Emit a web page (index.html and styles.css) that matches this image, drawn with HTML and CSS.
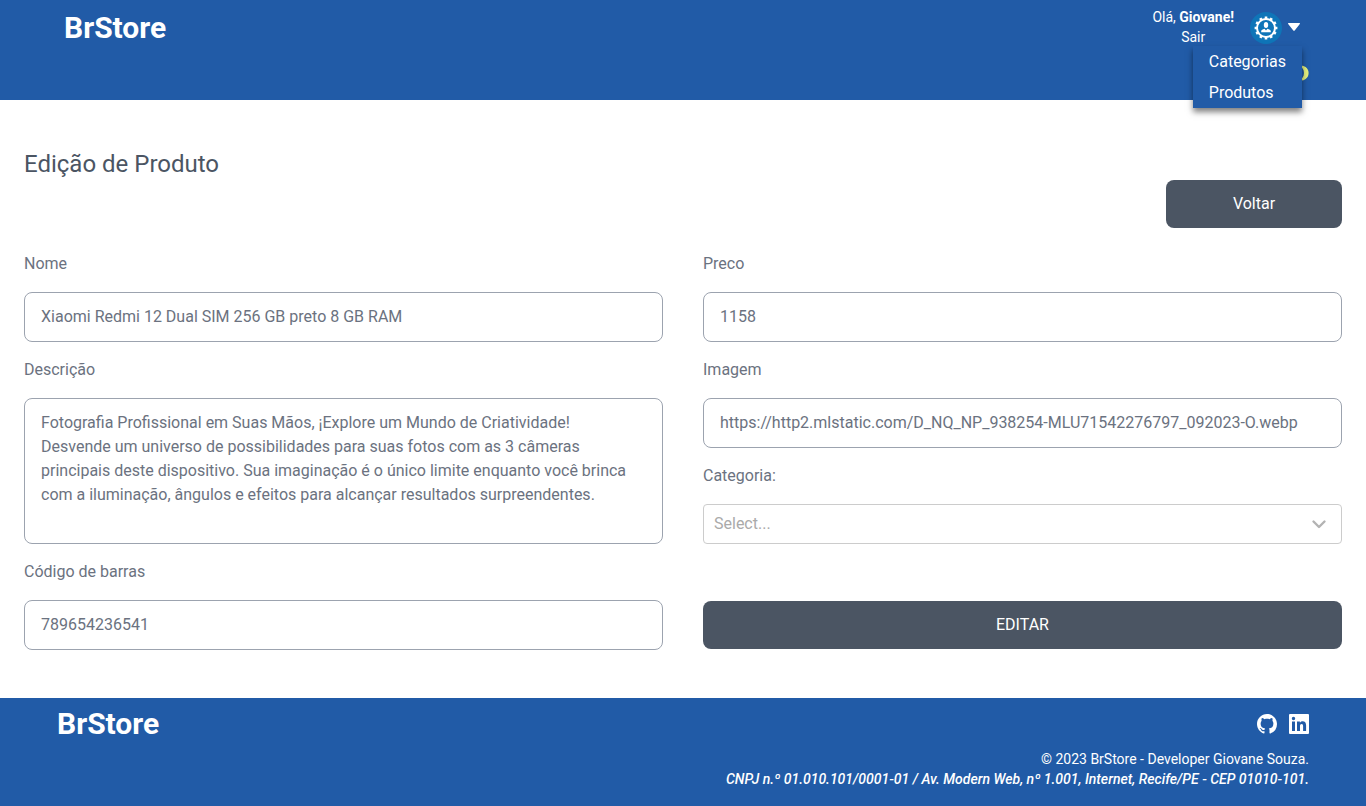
FILE: index.html
```html
<!DOCTYPE html>
<html lang="pt-BR">
<head>
<meta charset="utf-8">
<meta name="viewport" content="width=device-width, initial-scale=1">
<title>BrStore - Edição de Produto</title>
<link rel="stylesheet" href="styles.css">
</head>
<body>
<header class="header">
  <a class="brand" href="#">BrStore</a>
  <div class="header-side">
    <div class="account">
      <div class="greeting">
        <span>Olá, <strong>Giovane!</strong></span>
        <a href="#">Sair</a>
      </div>
      <button class="menu-toggle" type="button" aria-label="Menu de administração">
        <svg class="avatar" viewBox="0 0 32 32" width="32" height="32" aria-hidden="true">
          <circle cx="16" cy="16" r="16" fill="#0f75b8"/>
          <circle cx="16" cy="16" r="9" fill="none" stroke="#fff" stroke-width="2"/>
          <path d="M16 4.600v3M16 24.400v3M4.600 16h3M24.400 16h3M10.300 6.100l1.500 2.600M20.200 23.300l1.500 2.600M6.100 10.300l2.600 1.500M23.300 20.200l2.600 1.500M21.700 6.100l-1.500 2.600M11.800 23.300l-1.500 2.600M25.900 10.300l-2.600 1.500M8.700 20.200l-2.600 1.500" stroke="#fff" stroke-width="2.600"/>
          <ellipse cx="16" cy="13" rx="2.200" ry="2.900" fill="#fff"/>
          <path d="M11.200 20.200v-1c0-1.400 1.600-2 3.400-2.500l1.400 1.800 1.400-1.800c1.800.5 3.400 1.100 3.400 2.500v1z" fill="#fff"/>
        </svg>
        <svg class="caret" viewBox="0 0 12 10" width="12" height="10" aria-hidden="true"><path d="M.6 0h10.800c.6 0 .8.700.4 1.100L6.700 7.400c-.4.500-1 .5-1.400 0L.2 1.100C-.2.700 0 0 .6 0z" fill="#fff"/></svg>
      </button>
      <nav class="dropdown" aria-label="Administração">
        <a href="#">Categorias</a>
        <a href="#">Produtos</a>
      </nav>
    </div>
    <button class="theme" type="button" aria-label="Alternar tema">
      <svg viewBox="0 0 16 16" width="16" height="16" aria-hidden="true"><path d="M6 .8a7.500 7.500 0 1 1 0 14.400C9 14 11 11.500 11 8S9 2 6 .8z" fill="#e3f07f"/></svg>
    </button>
  </div>
</header>

<main class="main">
  <h1 class="title">Edição de Produto</h1>
  <div class="toolbar"><button class="button back" type="button">Voltar</button></div>
  <form class="form">
    <div class="column">
      <div class="field">
        <label for="nome">Nome</label>
        <input class="control" id="nome" type="text" value="Xiaomi Redmi 12 Dual SIM 256 GB preto 8 GB RAM">
      </div>
      <div class="field">
        <label for="descricao">Descrição</label>
        <textarea class="control" id="descricao" rows="5">Fotografia Profissional em Suas Mãos, ¡Explore um Mundo de Criatividade! Desvende um universo de possibilidades para suas fotos com as 3 câmeras principais deste dispositivo. Sua imaginação é o único limite enquanto você brinca com a iluminação, ângulos e efeitos para alcançar resultados surpreendentes.</textarea>
      </div>
      <div class="field">
        <label for="codigo">Código de barras</label>
        <input class="control" id="codigo" type="text" value="789654236541">
      </div>
    </div>
    <div class="column">
      <div class="field">
        <label for="preco">Preco</label>
        <input class="control" id="preco" type="text" value="1158">
      </div>
      <div class="field">
        <label for="imagem">Imagem</label>
        <input class="control" id="imagem" type="text" value="https://http2.mlstatic.com/D_NQ_NP_938254-MLU71542276797_092023-O.webp">
      </div>
      <div class="field">
        <label for="categoria">Categoria:</label>
        <div class="select-box">
          <select id="categoria"><option>Select...</option></select>
          <svg viewBox="0 0 20 20" width="20" height="20" aria-hidden="true"><path d="M4.500 7.500l5.500 5.500 5.500-5.500" fill="none" stroke="#b3b3b3" stroke-width="2.400" stroke-linecap="round" stroke-linejoin="round"/></svg>
        </div>
      </div>
      <button class="button submit" type="submit">EDITAR</button>
    </div>
  </form>
</main>

<footer class="footer">
  <a class="brand" href="#">BrStore</a>
  <div class="footer-side">
    <div class="social">
      <a href="#" aria-label="GitHub"><svg viewBox="0 0 16 16" width="20" height="20" aria-hidden="true"><path fill="#fff" d="M8 0C3.580 0 0 3.580 0 8c0 3.540 2.290 6.530 5.470 7.590.4.070.55-.17.55-.38 0-.19-.01-.82-.01-1.490-2.010.37-2.530-.49-2.690-.94-.09-.23-.48-.94-.82-1.130-.28-.15-.68-.52-.01-.53.63-.01 1.080.58 1.230.82.72 1.210 1.870.87 2.330.66.07-.52.28-.87.51-1.070-1.780-.2-3.640-.89-3.640-3.950 0-.87.31-1.590.82-2.150-.08-.2-.36-1.020.08-2.120 0 0 .67-.21 2.200.82.64-.18 1.320-.27 2-.27s1.360.09 2 .27c1.530-1.040 2.200-.82 2.200-.82.44 1.100.16 1.920.08 2.120.51.56.82 1.270.82 2.150 0 3.070-1.870 3.750-3.650 3.950.29.25.54.73.54 1.480 0 1.070-.01 1.930-.01 2.200 0 .21.15.46.55.38A8.010 8.010 0 0 0 16 8c0-4.420-3.580-8-8-8z"/></svg></a>
      <a href="#" aria-label="LinkedIn"><svg viewBox="0 0 20 20" width="20" height="20" aria-hidden="true"><path fill="#fff" fill-rule="evenodd" d="M1 0h18a1 1 0 0 1 1 1v18a1 1 0 0 1-1 1H1a1 1 0 0 1-1-1V1a1 1 0 0 1 1-1zM3 7.500V17h3V7.500zM4.500 2.800a1.700 1.700 0 1 0 0 3.400 1.700 1.700 0 0 0 0-3.400zM8 7.500V17h3v-5c0-1.300.5-2 1.600-2s1.500.8 1.500 2v5h3v-5.500c0-2.700-1.200-4.200-3.500-4.200-1.300 0-2.200.6-2.700 1.500V7.500z"/></svg></a>
    </div>
    <p>© 2023 BrStore - Developer Giovane Souza.</p>
    <address>CNPJ n.º 01.010.101/0001-01 / Av. Modern Web, nº 1.001, Internet, Recife/PE - CEP 01010-101.</address>
  </div>
</footer>
</body>
</html>
```
FILE: styles.css
```css
*, *::before, *::after { box-sizing: border-box; }

body {
  margin: 0;
  min-height: 100vh;
  display: flex;
  flex-direction: column;
  background: #fff;
  color: #4b5563;
  font: 400 16px/24px Roboto, sans-serif;
}

a { color: inherit; text-decoration: none; }
h1, p { margin: 0; }
button, input, textarea, select { font: inherit; color: inherit; margin: 0; }
button { border: 0; cursor: pointer; }
svg { display: block; }

.brand { font-size: 30px; line-height: 36px; font-weight: 700; }

.header {
  display: flex;
  justify-content: space-between;
  align-items: flex-start;
  min-height: 100px;
  padding: 10px 57px 0 64px;
  background: #215ba7;
  color: #fff;
}
.header-side { display: flex; flex-direction: column; align-items: flex-end; gap: 18px; }
.account { position: relative; display: flex; gap: 16px; padding-right: 9px; }
.greeting {
  display: flex;
  flex-direction: column;
  align-items: center;
  margin-top: -3px;
  font-size: 14px;
  line-height: 20px;
}
.greeting strong { font-weight: 700; }
.menu-toggle {
  display: flex;
  align-items: center;
  gap: 6px;
  height: 32px;
  margin-top: 2px;
  padding: 0;
  background: none;
}
.dropdown {
  position: absolute;
  top: 36px;
  right: 7px;
  display: flex;
  flex-direction: column;
  gap: 7px;
  padding: 4px 16px 3px;
  background: #215ba7;
  box-shadow: 0 4px 6px rgba(0, 0, 0, .5);
}
.theme { padding: 0; background: none; }

.main { flex: 1; padding: 48px 24px; }
.title { font-size: 24px; line-height: 32px; font-weight: 400; }
.toolbar { display: flex; justify-content: flex-end; margin-bottom: 24px; }
.button {
  height: 48px;
  padding: 0 16px;
  border-radius: 8px;
  background: #4b5563;
  color: #fff;
}
.back { width: 176px; }

.form { display: grid; grid-template-columns: 1fr 1fr; gap: 40px; color: #6b7280; }
.column { display: flex; flex-direction: column; gap: 16px; min-width: 0; }
.field { display: flex; flex-direction: column; gap: 16px; }
.control {
  display: block;
  width: 100%;
  height: 50px;
  padding: 11px 16px 13px;
  border: 1px solid #9ca3af;
  border-radius: 8px;
  background: #fff;
  outline: 0;
}
textarea.control { height: 146px; padding: 12px 32px 12px 16px; resize: none; }

.select-box { position: relative; }
.select-box select {
  display: block;
  width: 100%;
  height: 40px;
  padding: 0 40px 0 10px;
  border: 1px solid #ccc;
  border-radius: 4px;
  background: #fff;
  color: #aaa;
  appearance: none;
}
.select-box svg { position: absolute; top: 10px; right: 13px; pointer-events: none; }
.submit { width: 100%; margin-top: auto; margin-bottom: 1px; }

.footer {
  display: flex;
  justify-content: space-between;
  align-items: flex-start;
  padding: 8px 57px 17px;
  background: #215ba7;
  color: #fff;
}
.footer-side {
  display: flex;
  flex-direction: column;
  align-items: flex-end;
  padding-top: 8px;
  font-size: 14px;
  line-height: 20px;
  text-align: right;
}
.footer-side address { font-weight: 500; }
.social { display: flex; gap: 12px; margin-bottom: 15px; }
```
